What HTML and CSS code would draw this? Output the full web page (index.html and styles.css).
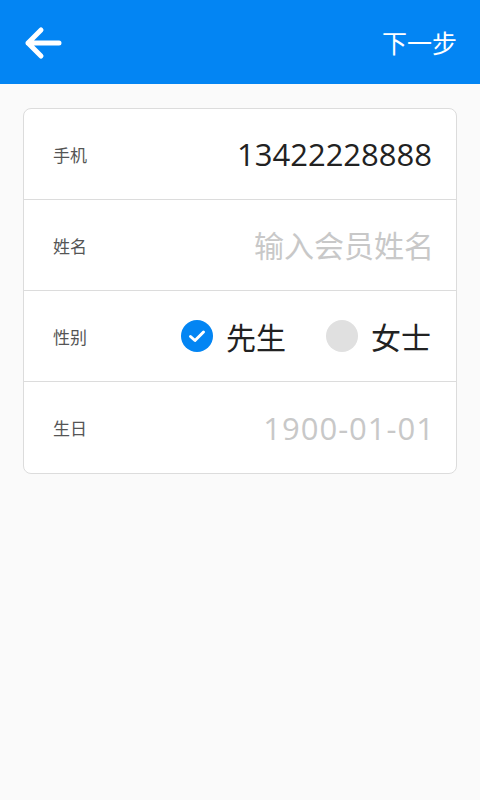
FILE: index.html
```html
<!DOCTYPE html>
<html lang="zh-CN">

<head>
  <meta charset="UTF-8">
  <meta name="viewport" content="width=device-width, initial-scale=1.0">
  <title>会员信息</title>
  <link rel="stylesheet" href="styles.css">
</head>

<body>

  <header class="topbar">
    <button class="back" type="button" aria-label="返回">
      <svg width="38" height="34" viewBox="0 0 38 34">
        <path d="M35 17H4M17 4L4 17L17 30" fill="none" stroke="#fff" stroke-width="5" stroke-linecap="round" stroke-linejoin="round"/>
      </svg>
    </button>
    <span class="next">下一步</span>
  </header>

  <form class="card">
    <div class="row">
      <label class="label">手机</label>
      <span class="value">13422228888</span>
    </div>

    <div class="row">
      <label class="label" for="name">姓名</label>
      <input class="input" type="text" id="name" placeholder="输入会员姓名">
    </div>

    <div class="row">
      <span class="label">性别</span>
      <div class="gender">
        <span class="option">
          <span class="radio checked">
            <svg width="18" height="14" viewBox="0 0 18 14">
              <path d="M2.5 7.5L7 11.5L15.5 3" fill="none" stroke="#fff" stroke-width="3" stroke-linecap="round" stroke-linejoin="round"/>
            </svg>
          </span>
          先生
        </span>
        <span class="option">
          <span class="radio"></span>
          女士
        </span>
      </div>
    </div>

    <div class="row">
      <span class="label">生日</span>
      <span class="value muted">1900-01-01</span>
    </div>
  </form>

</body>

</html>
```

FILE: styles.css
```css
body {
  font-family: 'Open Sans', 'Noto Sans CJK SC', sans-serif;
  background-color: #fafafa;
  margin: 0;
  padding: 0;
  height: 100vh;
}

.topbar {
  background-color: #0385f3;
  height: 84px;
  display: flex;
  align-items: center;
  justify-content: space-between;
  padding: 0 24px 0 24px;
}

.back {
  background: none;
  border: none;
  padding: 0;
  margin-top: 2px;
  display: flex;
  cursor: pointer;
}

.next {
  color: #fff;
  font-size: 25px;
  margin-right: -1px;
}

.card {
  background-color: #fff;
  margin: 24px 23px 0 23px;
  border: 1px solid #dcdcdc;
  border-radius: 8px;
}

.row {
  height: 90px;
  display: flex;
  align-items: center;
  justify-content: space-between;
  padding: 0 24px 0 29px;
  border-bottom: 1px solid #dcdcdc;
}

.row:last-child {
  height: 91px;
  border-bottom: none;
}

.label {
  font-size: 17px;
  color: #555;
}

.value {
  font-size: 31px;
  color: #222;
}

.value.muted {
  color: #c8c8c8;
  letter-spacing: 1px;
  margin-right: -3px;
}

.input {
  border: none;
  outline: none;
  text-align: right;
  font-family: inherit;
  font-size: 30px;
  width: 240px;
  padding: 0;
  margin-right: -2px;
  color: #222;
}

.input::placeholder {
  color: #c8c8c8;
}

.gender {
  display: flex;
  gap: 40px;
  margin-right: 1px;
}

.option {
  display: flex;
  align-items: center;
  gap: 13px;
  font-size: 30px;
  color: #222;
}

.radio {
  width: 32px;
  height: 32px;
  border-radius: 50%;
  background-color: #e0e0e0;
  display: flex;
  align-items: center;
  justify-content: center;
}

.radio.checked {
  background-color: #0385f3;
}
```
